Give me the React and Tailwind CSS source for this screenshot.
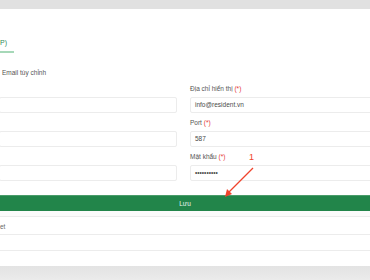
import React from 'react';

const fieldsRight = [
  { label: 'Địa chỉ hiển thị', value: 'info@resident.vn' },
  { label: 'Port', value: '587' },
  { label: 'Mật khẩu', value: '••••••••••' },
];

function Field({ label, value, first }) {
  return (
    <div className={first ? '' : 'mt-[5px]'}>
      <div className="h-[10px] leading-[10px] text-[6.5px] text-[#555]">
        {label} {label && <span className="text-[#e53935]">(*)</span>}
      </div>
      <div className="mt-[3px] h-[16px] border border-[#ececec] rounded-[2px] bg-white flex items-center px-[4px] text-[6.5px] text-[#4a4a4a]">
        {value}
      </div>
    </div>
  );
}

export default function App() {
  return (
    <div
      className="w-[370px] h-[280px] overflow-hidden bg-white flex flex-col relative"
      style={{ fontFamily: '"Liberation Sans", Arial, sans-serif' }}
    >
      {/* barra superior */}
      <div className="h-[9px] bg-[#e1e1e1] shrink-0" />

      <div className="flex-1 flex flex-col">
        {/* tab */}
        <div className="pt-[29px] flex">
          <span className="text-[7px] leading-[10px] text-[#2e8b57] pr-[7px] pb-[3px] border-b-2 border-[#a6d8b8]">
            P)
          </span>
        </div>

        <div className="mt-[15px] pl-[2px] h-[10px] leading-[10px] text-[6.5px] text-[#555]">
          Email tùy chỉnh
        </div>

        {/* form */}
        <div className="mt-[6px] grid grid-cols-[178px_240px] gap-x-[12px] -ml-px">
          <div className="flex flex-col">
            <Field label="" value="" first />
            <Field label="" value="" />
            <Field label="" value="" />
          </div>
          <div className="flex flex-col pl-[1px]">
            {fieldsRight.map((f, i) => (
              <Field key={f.label} label={f.label} value={f.value} first={i === 0} />
            ))}
          </div>
        </div>

        <button className="mt-[14px] h-[16px] w-full bg-[#22854a] border-t border-[#4a9c6a] text-[6.5px] text-[#e8f3ec] flex items-center justify-center">
          Lưu
        </button>

        <div className="h-[6px] bg-[#fbfbfb] border-b border-[#ececec]" />
        <div className="h-[18px] border-b border-[#ececec] flex items-center pt-[2px] text-[6.5px] text-[#666]">
          et
        </div>
        <div className="h-[16px] border-b border-[#ececec]" />
        <div className="flex-1" />
      </div>

      <div className="h-[14px] bg-gradient-to-b from-[#e3e3e3] to-[#ebebeb] shrink-0" />

      {/* anotação */}
      <div className="absolute left-[249px] top-[152px] text-[9px] leading-[10px] text-[#f0432c]">1</div>
      <svg className="absolute left-0 top-0" width="370" height="280" viewBox="0 0 370 280">
        <line x1="253" y1="168" x2="228" y2="193" stroke="#f0432c" strokeWidth="1.2" />
        <polygon points="225,197 227,189 232,194" fill="#f0432c" />
      </svg>
    </div>
  );
}
